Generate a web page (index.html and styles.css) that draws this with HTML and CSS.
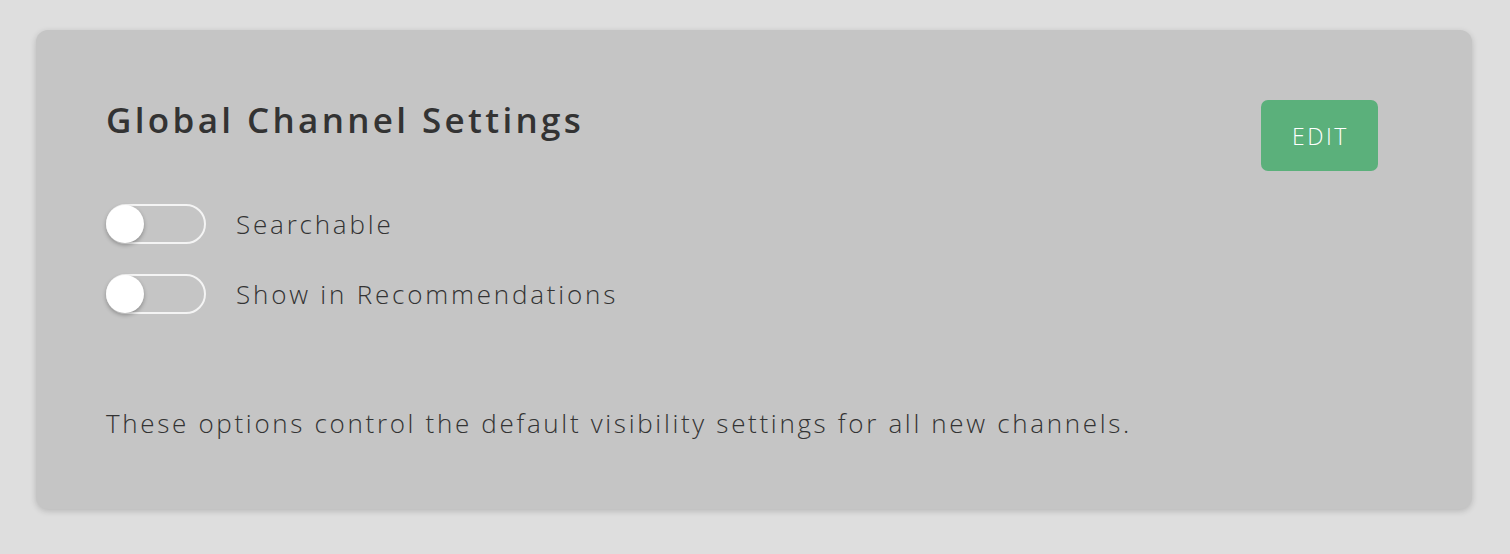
FILE: index.html
```html
<!DOCTYPE html>
<html>
<head>
<meta charset="utf-8">
<link rel="stylesheet" href="styles.css">
</head>
<body>
<div class="card">
  <div class="header">
    <h2 class="title">Global Channel Settings</h2>
    <button class="edit">EDIT</button>
  </div>
  <div class="options">
    <div class="option">
      <span class="toggle"><span class="knob"></span></span>
      <span class="label">Searchable</span>
    </div>
    <div class="option">
      <span class="toggle"><span class="knob"></span></span>
      <span class="label">Show in Recommendations</span>
    </div>
  </div>
  <p class="note">These options control the default visibility settings for all new channels.</p>
</div>
</body>
</html>
```
FILE: styles.css
```css
html, body { margin: 0; padding: 0; }
body {
  background: #dedede;
  width: 1510px;
  height: 554px;
  font-family: "Open Sans", "DejaVu Sans", sans-serif;
  color: #333;
  padding: 30px 38px 0 36px;
  box-sizing: border-box;
}
.card {
  background: #c5c5c5;
  border-radius: 12px;
  box-shadow: 0 2px 6px rgba(0,0,0,0.18);
  height: 479px;
  box-sizing: border-box;
  padding: 70px 94px 0 70px;
}
.header {
  display: flex;
  justify-content: space-between;
  align-items: flex-start;
  height: 104px;
}
.title {
  margin: 0;
  font-size: 35px;
  font-weight: 600;
  line-height: 40px;
  letter-spacing: 3.35px;
  color: #333;
}
.edit {
  width: 117px;
  height: 71px;
  border: none;
  border-radius: 7px;
  background: #5bb07b;
  color: #fff;
  font-family: inherit;
  font-size: 23px;
  font-weight: 300;
  letter-spacing: 2.5px;
  padding: 0 0 0 2px;
}
.options {
  display: flex;
  flex-direction: column;
  gap: 30px;
}
.option {
  display: flex;
  align-items: center;
  gap: 30px;
  height: 40px;
}
.toggle {
  width: 100px;
  height: 40px;
  box-sizing: border-box;
  border: 2px solid #f4f4f4;
  border-radius: 20px;
  position: relative;
}
.knob {
  position: absolute;
  left: -2px;
  top: -1px;
  width: 38px;
  height: 38px;
  border-radius: 50%;
  background: #fff;
  box-shadow: 0 2px 4px rgba(0,0,0,0.3);
}
.label {
  font-size: 26px;
  font-weight: 300;
  letter-spacing: 2.8px;
  color: #333;
}
.note {
  margin: 94px 0 0;
  font-size: 26px;
  font-weight: 300;
  letter-spacing: 2.67px;
  line-height: 30px;
  color: #333;
}
```
